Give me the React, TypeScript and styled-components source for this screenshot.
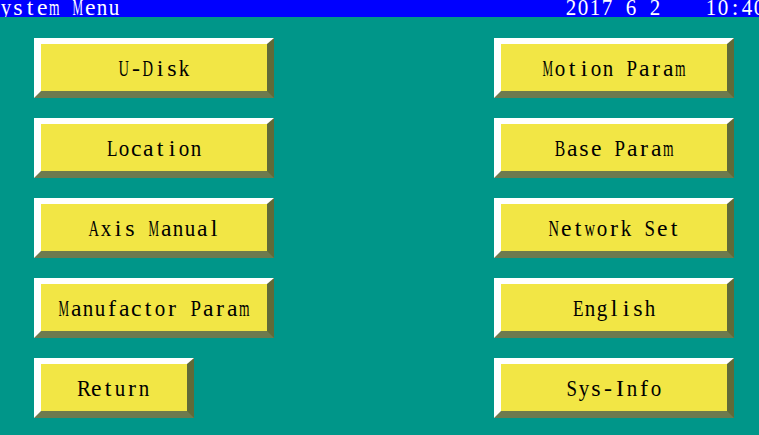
import React from "react";
import styled, { createGlobalStyle } from "styled-components";

// Colours of the panel screen
const TEAL = "#009689";
const BLUE = "#0000ff";
const YELLOW = "#f2e645";
const SHADE_RIGHT = "#606a38";
const SHADE_BOTTOM = "#6e7a4e";

const GlobalStyle = createGlobalStyle`
  html, body {
    margin: 0;
    padding: 0;
    background: ${TEAL};
    width: 759px;
    height: 435px;
    overflow: hidden;
  }
  body {
    font-family: "Liberation Serif", "Times New Roman", serif;
  }
`;

const Screen = styled.div`
  width: 759px;
  height: 435px;
  background: ${TEAL};
  display: flex;
  flex-direction: column;
`;

// advance widths (em) of Liberation Serif, to squeeze each glyph into a 12px cell
const ADVANCE: Record<string, number> = {
  M: 0.889, W: 0.944, m: 0.778, w: 0.722, U: 0.722, D: 0.722, A: 0.722, N: 0.722,
  B: 0.667, L: 0.611, E: 0.611, P: 0.556, S: 0.556, I: 0.333,
  o: 0.5, n: 0.5, k: 0.5, x: 0.5, u: 0.5, g: 0.5, h: 0.5, y: 0.5, a: 0.444,
  c: 0.444, e: 0.444, s: 0.389, r: 0.333, f: 0.333, t: 0.278, i: 0.278, l: 0.278,
  "-": 0.333, ":": 0.278,
};
const FONT_PX = 24;
const GLYPH_PX = 10.5;
const squeeze = (ch: string) => Math.min(1, GLYPH_PX / ((ADVANCE[ch] ?? 0.5) * FONT_PX));

// fixed 12px cells: the panel font is a half-width serif bitmap
const Line = styled.span`
  display: inline-flex;
  font-family: "Liberation Serif", "Times New Roman", serif;
  font-size: ${FONT_PX}px;
  line-height: 24px;
  -webkit-font-smoothing: none;
`;

const Cell = styled.span`
  width: 12px;
  display: inline-flex;
  justify-content: center;
  white-space: pre;
  span {
    display: inline-block;
  }
`;

const Glyphs: React.FC<{ text: string }> = ({ text }) => (
  <Line>
    {text.split("").map((ch, i) => (
      <Cell key={i}>
        <span style={{ transform: `scaleX(${squeeze(ch)})` }}>{ch}</span>
      </Cell>
    ))}
  </Line>
);

const TitleBar = styled.header`
  height: 17px;
  background: ${BLUE};
  color: #fff;
  display: flex;
  align-items: flex-start;
  overflow: hidden;
`;

const Title = styled.div`
  margin: -5px 0 0 -12px;
`;

const Clock = styled.div`
  margin: -5px -6px 0 auto;
  display: flex;
  gap: 44px;
`;

const Menu = styled.main`
  display: grid;
  grid-template-columns: 240px 240px;
  column-gap: 220px;
  row-gap: 20px;
  padding: 21px 0 0 34px;
`;

const MenuButton = styled.button<{ $short?: boolean }>`
  width: ${(p) => (p.$short ? "160px" : "240px")};
  height: 60px;
  box-sizing: border-box;
  margin: 0;
  padding: 1px 0 0;
  background: ${YELLOW};
  border-style: solid;
  border-width: 6px 7px 7px 7px;
  border-color: #fff ${SHADE_RIGHT} ${SHADE_BOTTOM} #fff;
  color: #000;
  display: flex;
  align-items: center;
  justify-content: center;
  cursor: pointer;
`;

const items = [
  { label: "U-Disk" },
  { label: "Motion Param" },
  { label: "Location" },
  { label: "Base Param" },
  { label: "Axis Manual" },
  { label: "Network Set" },
  { label: "Manufactor Param" },
  { label: "English" },
  { label: "Return", short: true },
  { label: "Sys-Info" },
];

export default function App() {
  return (
    <>
      <GlobalStyle />
      <Screen>
        <TitleBar>
          <Title>
            <Glyphs text="System Menu" />
          </Title>
          <Clock>
            <Glyphs text="2017 6 2" />
            <Glyphs text="10:40" />
          </Clock>
        </TitleBar>
        <Menu>
          {items.map((it) => (
            <MenuButton key={it.label} $short={it.short}>
              <Glyphs text={it.label} />
            </MenuButton>
          ))}
        </Menu>
      </Screen>
    </>
  );
}
